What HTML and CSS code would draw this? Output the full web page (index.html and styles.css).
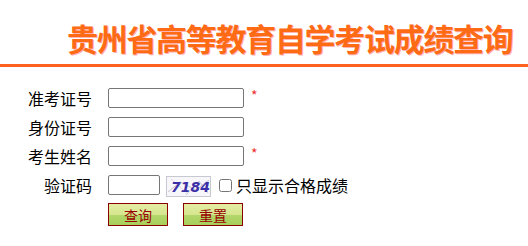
FILE: index.html
```html
<!DOCTYPE html>
<html lang="zh-CN">
<head>
    <meta charset="UTF-8">
    <title>贵州省高等教育自学考试成绩查询</title>
    <link rel="stylesheet" href="styles.css">
</head>
<body>
    <div class="header">
        <h1 class="title">贵州省高等教育自学考试成绩查询</h1>
    </div>
    <form class="query-form" onsubmit="return false;">
        <div class="row">
            <label class="label">准考证号</label>
            <input class="field" type="text">
            <span class="required">*</span>
        </div>
        <div class="row">
            <label class="label">身份证号</label>
            <input class="field" type="text">
        </div>
        <div class="row">
            <label class="label">考生姓名</label>
            <input class="field" type="text">
            <span class="required">*</span>
        </div>
        <div class="row">
            <label class="label">验证码</label>
            <input class="field code" type="text">
            <svg class="captcha" width="45" height="21" viewBox="0 0 45 21">
                <rect x="0.5" y="0.5" width="44" height="20" fill="#f7f7fb" stroke="#c8c8d0"/>
                <path d="M2 16 L14 6 L30 14 L43 4" stroke="#b9b2c4" fill="none" stroke-width="0.8"/>
                <path d="M20 19 L33 5 L42 17" stroke="#c4bccb" fill="none" stroke-width="0.8"/>
                <path d="M5 3 L22 18" stroke="#cfc8d6" fill="none" stroke-width="0.7"/>
                <text x="5" y="16" class="captcha-text">7184</text>
            </svg>
            <label class="check"><input type="checkbox">只显示合格成绩</label>
        </div>
        <div class="buttons">
            <button class="btn" type="submit">查询</button>
            <button class="btn" type="reset">重置</button>
        </div>
    </form>
</body>
</html>
```
FILE: styles.css
```css
body {
    margin: 0;
    background-color: #fff;
    font-family: "Noto Sans CJK SC", "Noto Sans", sans-serif;
    color: #000;
}
.header {
    height: 64px;
    border-bottom: 3px solid #ff6121;
    box-sizing: content-box;
}
.title {
    margin: 0;
    padding: 22px 0 0 67px;
    font-size: 31px;
    line-height: 32px;
    letter-spacing: -1.3px;
    font-weight: bold;
    color: #ff6a14;
    text-shadow: 1px 1px 0 #ffb3b3;
    white-space: nowrap;
}
.query-form {
    padding: 21px 0 0 0;
}
.row {
    display: flex;
    align-items: center;
    height: 20px;
    margin-bottom: 9px;
}
.label {
    width: 92px;
    text-align: right;
    font-size: 16px;
    line-height: 20px;
    margin-right: 16px;
}
.field {
    box-sizing: border-box;
    width: 136px;
    height: 20px;
    padding: 0 2px;
    margin: 0;
    border: 1px solid #767676;
    border-radius: 2px;
    font-size: 13px;
}
.field.code {
    width: 52px;
}
.required {
    margin-left: 7px;
    color: #f03030;
    font-size: 14px;
    line-height: 13px;
    align-self: flex-start;
    padding-top: 1px;
}
.captcha {
    margin-left: 6px;
    margin-top: 2px;
}
.captcha-text {
    font-family: "DejaVu Sans", sans-serif;
    font-size: 14px;
    font-weight: bold;
    font-style: italic;
    fill: #3b2fa8;
}
.check {
    display: flex;
    align-items: center;
    margin-left: 8px;
    font-size: 16px;
    line-height: 20px;
}
.check input {
    width: 13px;
    height: 13px;
    margin: 0 4px 0 0;
}
.buttons {
    display: flex;
    gap: 15px;
    padding-left: 108px;
    margin-top: -1px;
}
.btn {
    box-sizing: border-box;
    width: 60px;
    height: 23px;
    padding: 0;
    border: 1px solid #8b0000;
    background: linear-gradient(#e4eda4 0%, #d6e68e 50%, #b2d66a 55%, #a8cf5c 100%);
    color: #990000;
    font-family: "Noto Sans CJK SC", sans-serif;
    font-size: 14px;
    line-height: 20px;
    cursor: pointer;
}
```
